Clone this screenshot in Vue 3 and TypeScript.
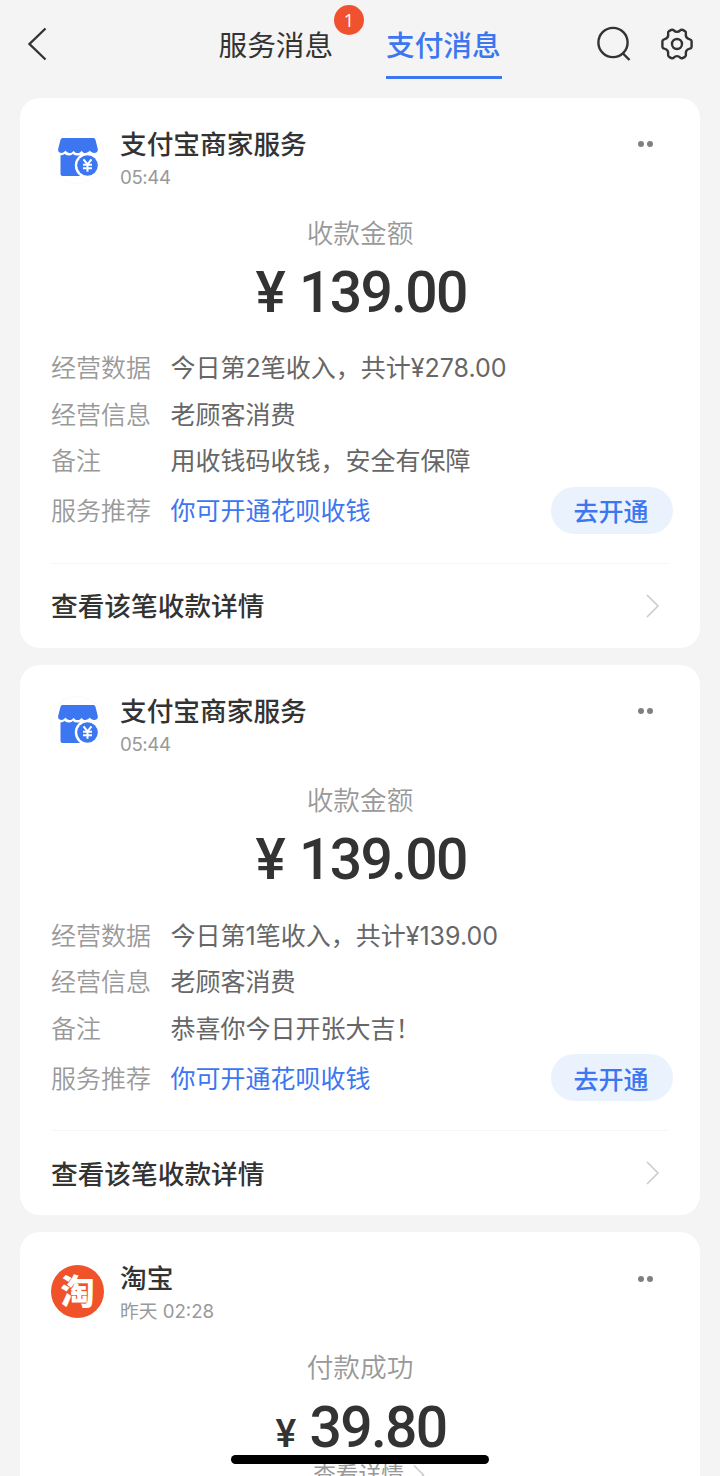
<script setup lang="ts">
interface Row {
  label: string
  value: string
}

interface Receipt {
  id: number
  time: string
  amount: string
  rows: Row[]
}

const receipts: Receipt[] = [
  {
    id: 1,
    time: '05:44',
    amount: '139.00',
    rows: [
      { label: '经营数据', value: '今日第2笔收入，共计¥278.00' },
      { label: '经营信息', value: '老顾客消费' },
      { label: '备注', value: '用收钱码收钱，安全有保障' },
    ],
  },
  {
    id: 2,
    time: '05:44',
    amount: '139.00',
    rows: [
      { label: '经营数据', value: '今日第1笔收入，共计¥139.00' },
      { label: '经营信息', value: '老顾客消费' },
      { label: '备注', value: '恭喜你今日开张大吉！' },
    ],
  },
]
</script>

<template>
  <div class="page">
    <header class="bar">
      <svg class="back" width="24" height="36" viewBox="0 0 24 36">
        <path d="M20.5 2.5 4.5 18l16 15.5" />
      </svg>
      <nav class="tabs">
        <div class="tab">服务消息<span class="badge">1</span></div>
        <div class="tab active">支付消息</div>
      </nav>
      <div class="tools">
        <svg width="36" height="36" viewBox="0 0 36 36">
          <circle cx="17" cy="16.5" r="14.6" />
          <path d="m27 27.500 6.500 6.500" />
        </svg>
        <svg width="36" height="36" viewBox="0 0 36 36">
          <path
            d="M14.800 4.400c1.800 2 4.600 2 6.400 0q1-1.100 2.500-.5l2.200 1.200q1.300.8 1 2.300c-.5 2.900 1 5.200 3.900 5.900q1.600.4 1.800 1.900v5.600q-.2 1.500-1.800 1.900c-2.900.7-4.400 3-3.900 5.900q.3 1.500-1 2.300l-2.200 1.200q-1.500.6-2.500-.5c-1.800-2-4.600-2-6.400 0q-1 1.100-2.500.5l-2.200-1.200q-1.300-.8-1-2.300c.5-2.900-1-5.200-3.900-5.900q-1.600-.4-1.800-1.900v-5.600q.2-1.500 1.800-1.900c2.900-.7 4.400-3 3.900-5.900q-.3-1.500 1-2.300l2.200-1.200q1.500-.6 2.500.5z"
          />
          <circle cx="18" cy="18" r="5" />
        </svg>
      </div>
    </header>

    <main class="list">
      <section v-for="item in receipts" :key="item.id" class="card">
        <div class="head">
          <div class="avatar shop">
            <svg width="53" height="53" viewBox="0 0 53 53">
              <path
                d="M11.500 8h31q1.500 0 1.900 1.500l2.300 9.300c.6 2.400-1.100 4.200-3.200 4.200-2.400 0-3.700-1-4.700-2.500-1.100 1.600-2.500 2.500-4.200 2.500-1.800 0-3.100-.9-4-2.300-1 1.400-2.200 2.300-4 2.300s-3-.9-4-2.300c-1 1.400-2.300 2.300-4 2.300s-3.100-.9-4.200-2.500c-1 1.500-2.200 2.500-4.200 2.500-2.300 0-3.600-1.900-3-4.200l2.400-9.300Q10 8 11.500 8z"
              />
              <path d="M9.500 25.600q2.500-.2 4.200-1.600 2 1.600 4.200 1.600t4-1.600q1.900 1.600 4 1.600h10.600v20.400h-25q-2 0-2-2z" />
              <circle class="halo" cx="36.500" cy="35.500" r="12.700" />
              <circle cx="36.500" cy="35.500" r="10.300" />
              <path class="yen" d="m32.500 29.300 4 5 4-5M32 34.800h9M32 38.200h9M36.500 34.300v7.400" />
            </svg>
          </div>
          <div class="who">
            <div class="name">支付宝商家服务</div>
            <div class="time clock">{{ item.time }}</div>
          </div>
          <div class="more"><i></i><i></i></div>
        </div>
        <div class="caption">收款金额</div>
        <div class="amount"><span class="sign">¥</span>{{ item.amount }}</div>
        <div class="rows">
          <div v-for="row in item.rows" :key="row.label" class="row">
            <span class="label">{{ row.label }}</span>
            <span class="value">{{ row.value }}</span>
          </div>
          <div class="row promo">
            <span class="label">服务推荐</span>
            <span class="value link">你可开通花呗收钱</span>
            <button class="open">去开通</button>
          </div>
        </div>
        <div class="detail">
          <span>查看该笔收款详情</span>
          <svg width="16" height="26" viewBox="0 0 16 26"><path d="m2 2 11 11L2 24" /></svg>
        </div>
      </section>

      <section class="card">
        <div class="head">
          <div class="avatar taobao">淘</div>
          <div class="who">
            <div class="name">淘宝</div>
            <div class="time">昨天 02:28</div>
          </div>
          <div class="more"><i></i><i></i></div>
        </div>
        <div class="caption">付款成功</div>
        <div class="amount"><span class="sign small">¥</span>39.80</div>
        <div class="view">
          <span>查看详情</span>
          <svg width="12" height="22" viewBox="0 0 12 22"><path d="m1 1.500 9.500 9.500L1 20.500" /></svg>
        </div>
      </section>
    </main>

    <div class="home"></div>
  </div>
</template>

<style>
html,
body {
  margin: 0;
  background: #f4f4f4;
}
</style>

<style scoped>
.page {
  position: relative;
  width: 720px;
  height: 1476px;
  overflow: hidden;
  background: #f4f4f4;
  font-family: Inter, 'Noto Sans CJK SC', sans-serif;
  color: #333;
}
.page * {
  box-sizing: border-box;
}
svg {
  display: block;
  flex: none;
}
.bar {
  display: flex;
  align-items: flex-start;
  height: 97.5px;
}
.back {
  margin: 26px 0 0 25px;
  fill: none;
  stroke: #333;
  stroke-width: 2.400;
}
.tabs {
  display: flex;
  gap: 52px;
  margin-left: 169.500px;
}
.tab {
  position: relative;
  height: 79px;
  width: 115.500px;
  line-height: 91px;
  font-size: 28.700px;
  white-space: nowrap;
}
.active {
  color: #3c76f0;
  font-weight: 500;
  border-bottom: 3.500px solid #3c76f0;
}
.badge {
  position: absolute;
  left: 115.500px;
  top: 5px;
  width: 30px;
  height: 30px;
  border-radius: 50%;
  background: #f05230;
  color: #fff;
  font: 18px/31px 'Open Sans', sans-serif;
  text-align: center;
}
.tools {
  display: flex;
  gap: 26.500px;
  margin: 26px 0 0 94.500px;
}
.tools svg {
  fill: none;
  stroke: #333;
  stroke-width: 2.400;
}
.list {
  display: flex;
  flex-direction: column;
  gap: 17px;
  padding: 0 20px;
}
.card {
  display: flex;
  flex-direction: column;
  flex: none;
  height: 550.300px;
  padding: 30px 31px 0;
  border-radius: 20px;
  background: #fff;
}
.head {
  display: flex;
  height: 66px;
}
.avatar {
  width: 53px;
  height: 53px;
  margin-top: 2.500px;
  border-radius: 50%;
}
.shop {
  box-shadow: 0 0 0 1px #fafafa;
}
.shop svg {
  fill: #3c76f0;
}
.shop .halo {
  fill: #fff;
}
.shop .yen {
  fill: none;
  stroke: #fff;
  stroke-width: 2;
}
.taobao {
  background: #f0522a;
  color: #fff;
  font-size: 34px;
  font-weight: 900;
  line-height: 54px;
  text-align: center;
}
.who {
  flex: 1;
  margin-left: 16px;
  line-height: 33px;
}
.name {
  font-size: 26.700px;
  font-weight: 500;
}
.time {
  font-size: 18.700px;
  color: #999;
}
.clock {
  letter-spacing: -0.400px;
}
.more {
  display: flex;
  gap: 3px;
  margin: 13.500px 16.300px 0 0;
}
.more i {
  width: 6px;
  height: 6px;
  border-radius: 50%;
  background: #808080;
}
.caption {
  margin-top: 21px;
  line-height: 36px;
  font-size: 26.700px;
  font-weight: 350;
  text-align: center;
  color: #999;
}
.amount {
  display: flex;
  justify-content: center;
  align-items: baseline;
  height: 60px;
  margin-top: 10.500px;
  padding-left: 2px;
  line-height: 63px;
  font-family: Roboto, sans-serif;
  font-size: 57px;
  font-weight: 500;
  letter-spacing: -1.700px;
}
.sign {
  margin-right: 15px;
}
.small {
  font-size: 39px;
}
.rows {
  margin-top: 23.700px;
}
.row {
  display: flex;
  align-items: center;
  height: 46.500px;
  padding-bottom: 3px;
  font-size: 25px;
  white-space: nowrap;
}
.label {
  width: 119.500px;
  color: #999;
  font-weight: 350;
}
.value {
  color: #666;
  font-weight: 380;
}
.promo {
  height: 53.500px;
}
.link {
  color: #3c76f0;
}
.open {
  width: 122px;
  height: 46.500px;
  margin: 2px -4px 0 auto;
  padding: 0 2px 0 0;
  border: 0;
  border-radius: 24px;
  background: #eaf2fd;
  color: #3c76f0;
  font: 500 25px/44px 'Noto Sans CJK SC', sans-serif;
}
.detail {
  display: flex;
  flex: 1;
  align-items: center;
  justify-content: space-between;
  margin-top: 25px;
  padding-right: 8px;
  border-top: 1.500px solid #f7f7f7;
  font-size: 26.700px;
  font-weight: 500;
}
.detail span {
  padding-bottom: 2px;
}
.detail svg,
.view svg {
  fill: none;
  stroke: #ccc;
  stroke-width: 1.600;
}
.view {
  display: flex;
  align-items: center;
  justify-content: center;
  gap: 9px;
  margin-top: 3px;
  padding-left: 18px;
  line-height: 32px;
  font-size: 22.700px;
  color: #999;
}
.home {
  position: absolute;
  left: 231px;
  top: 1455px;
  width: 258px;
  height: 9px;
  border-radius: 5px;
  background: #000;
}
</style>
